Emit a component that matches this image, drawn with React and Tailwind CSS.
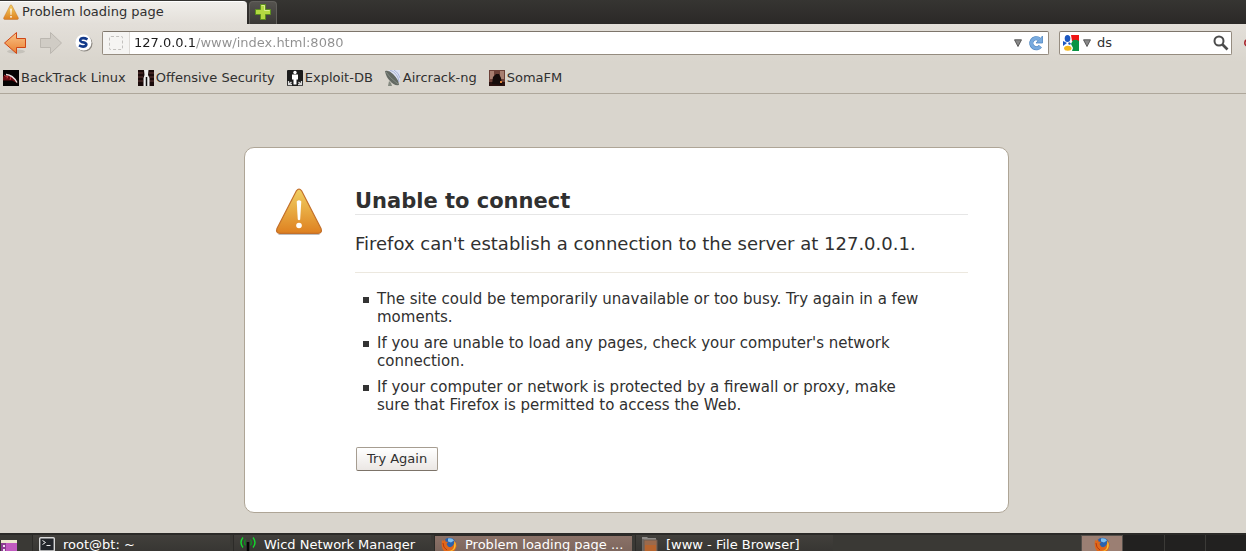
import React, { useState } from 'react';

const BOOKMARKS = [
    { label: 'BackTrack Linux', icon: BackTrackIcon },
    { label: 'Offensive Security', icon: OffensiveIcon },
    { label: 'Exploit-DB', icon: ExploitIcon },
    { label: 'Aircrack-ng', icon: DishIcon },
    { label: 'SomaFM', icon: SomaIcon },
];

const HINTS = [
    'The site could be temporarily unavailable or too busy. Try again in a few moments.',
    "If you are unable to load any pages, check your computer's network connection.",
    'If your computer or network is protected by a firewall or proxy, make sure that Firefox is permitted to access the Web.',
];

const WINDOWS = [
    { label: 'root@bt: ~', icon: TerminalIcon },
    { label: 'Wicd Network Manager', icon: WifiIcon },
    { label: 'Problem loading page ...', icon: FirefoxIcon, active: true },
    { label: '[www - File Browser]', icon: FolderIcon },
];

function WarningIcon({ className, id }) {
    return (
        <svg viewBox="0 0 48 48" className={className} aria-hidden="true">
            <defs>
                <linearGradient id={id} x1="0" y1="0" x2="0" y2="1">
                    <stop offset="0" stopColor="#f0cf62" />
                    <stop offset="0.5" stopColor="#e8a941" />
                    <stop offset="1" stopColor="#de8020" />
                </linearGradient>
            </defs>
            <path d="M4 47.2h40" stroke="#000" strokeOpacity=".25" strokeWidth="1.4" strokeLinecap="round" />
            <path
                d="M21.4 3.8Q24 .6 26.6 3.8L46 41.5q1.6 4.6-3 4.8H5q-4.6-.2-3-4.8Z"
                fill={`url(#${id})`}
                stroke="#c3702b"
                strokeWidth="1.2"
            />
            <path d="M21.7 14.5q2.3-2.3 4.6 0L25.2 32.5q-1.2 1.5-2.4 0Z" fill="#fff" />
            <circle cx="24" cy="38.5" r="2.8" fill="#fff" />
        </svg>
    );
}

function BackTrackIcon() {
    return (
        <svg viewBox="0 0 16 16" className="size-4 shrink-0" aria-hidden="true">
            <path d="M0 0h16v16H0z" fill="#050303" />
            <path d="M0 6.5l5-1 5 2 5 6-6-3-9 0z" fill="#6b0d12" />
            <path d="M3 4.5q7 .5 11 8" stroke="#e9dede" strokeWidth="1.3" fill="none" />
            <path d="M1 5l3 2M5 5.5l-1 3M8 7l-1 3" stroke="#c8363c" strokeWidth="1" />
        </svg>
    );
}

function OffensiveIcon() {
    return (
        <svg viewBox="0 0 16 16" className="size-4 shrink-0" aria-hidden="true">
            <path d="M0 0h16v16H0z" fill="#1b0b0b" />
            <path d="M0 3h5M11 3h5M0 7h5M11 7h5M0 11h5M11 11h5" stroke="#4a2a29" strokeWidth="1.5" />
            <path d="M6 0h4.500l-.5 5 1.500 3v8H5.500V8L6.500 5z" fill="#eee" />
            <path d="M8.500 7v9" stroke="#111" strokeWidth="1.5" />
        </svg>
    );
}

function ExploitIcon() {
    return (
        <svg viewBox="0 0 16 16" className="size-4 shrink-0" aria-hidden="true">
            <rect width="16" height="16" rx="1" fill="#1c1c1c" />
            <circle cx="8" cy="2.5" r="1.7" fill="#fff" />
            <path d="M5 4.5h6v5H9.500v5h-3v-5H5z" fill="#fff" />
            <path d="M1.500 11v3.500H5M14.500 11v3.500H11M2 14l2.500-2M14 14l-2.500-2" stroke="#ddd" strokeWidth="1.3" fill="none" />
        </svg>
    );
}

function DishIcon() {
    return (
        <svg viewBox="0 0 16 16" className="size-4 shrink-0" aria-hidden="true">
            <path d="M3 0h12v13z" fill="#dde2f2" />
            <path d="M5 0q8 3 9 12M9 0q5 3 6 8" stroke="#a9b4d6" strokeWidth="1" fill="none" />
            <path d="M0 1q4-1 8 3 6 6 6 11-5 1-9-4Q1 7 0 1z" fill="#636963" />
            <path d="M1 2q3 5 12 12" stroke="#8b938b" strokeWidth=".8" fill="none" />
            <path d="M4 11l-1 5h4l-1-3" fill="#83887f" />
        </svg>
    );
}

function SomaIcon() {
    return (
        <svg viewBox="0 0 16 16" className="size-4 shrink-0" aria-hidden="true">
            <path d="M0 0h16v16H0z" fill="#6c4138" />
            <path d="M1 1h4v8H1zM11 1h4v8h-4z" fill="#a77e70" />
            <path d="M0 12h16v4H0z" fill="#2a1210" />
            <path d="M3 14l1-7 3-3h3l2 4 1 7z" fill="#150c0b" />
            <path d="M11 11h2v2h-2z" fill="#e0853a" />
        </svg>
    );
}

function ArrowIcon({ forward }) {
    return (
        <svg viewBox="0 0 24 24" className="size-6" aria-hidden="true">
            <defs>
                <linearGradient id="backFill" x1="0" y1="0" x2="0" y2="1">
                    <stop offset="0" stopColor="#f9c48a" />
                    <stop offset="1" stopColor="#ea8030" />
                </linearGradient>
            </defs>
            {forward ? (
                <path d="M1.500 7.500h10v-6L22.500 12l-11 10.500v-6h-10z" fill="#d0ccc5" stroke="#bbb7b0" />
            ) : (
                <>
                    <ellipse cx="13" cy="20.5" rx="9" ry="2" fill="#000" opacity=".1" />
                    <path d="M22.500 7.500h-9v-6L1.500 12l12 10.500v-6h9z" fill="url(#backFill)" stroke="#cf4515" />
                </>
            )}
        </svg>
    );
}

function ScriptIcon() {
    return (
        <svg viewBox="0 0 18 18" className="size-[18px]" aria-hidden="true">
            <circle cx="9.5" cy="9.5" r="8" fill="#8d8983" />
            <circle cx="8.5" cy="8.5" r="8" fill="#fff" />
            <path
                d="M12.500 5.300Q8.500 3.300 6 4.700q-1.900 2 .6 3.200l3.400.9q2.500 1.300.5 3.200-2.700 1.400-6.500-.6"
                fill="none"
                stroke="#12398a"
                strokeWidth="2.6"
            />
        </svg>
    );
}

function DownTriangle() {
    return (
        <svg viewBox="0 0 8 8" className="size-2" aria-hidden="true">
            <path d="M.5.800h7L4 7.500z" fill="#888" stroke="#4e4e4e" strokeWidth=".9" />
        </svg>
    );
}

function ReloadIcon() {
    return (
        <svg viewBox="0 0 16 16" className="size-4" aria-hidden="true">
            <path d="M12.300 11.300A5 5 0 1 1 11 4" fill="none" stroke="#4f86c0" strokeWidth="4.2" />
            <path d="M14.500 1v7H8z" fill="#78aade" stroke="#4f86c0" strokeWidth=".8" />
            <path d="M12.300 11.300A5 5 0 1 1 11.500 4.300" fill="none" stroke="#78aade" strokeWidth="3" />
        </svg>
    );
}

function GoogleIcon() {
    return (
        <svg viewBox="0 0 16 16" className="size-4" aria-hidden="true">
            <path d="M0 0h16v16H0z" fill="#fff" />
            <path d="M8 0h8v6H9z" fill="#f01414" />
            <path d="M10 5q3-1 6 1v10H9l1-3-2-4z" fill="#0b9444" />
            <path d="M0 6l4 2-4 3z" fill="#1c57c0" />
            <ellipse cx="4.5" cy="3.5" rx="2.8" ry="3.5" fill="#1c57c0" />
            <path d="M6 7l2 1.500L7 10 5 9z" fill="#1c57c0" />
            <ellipse cx="4.8" cy="13.3" rx="3.7" ry="2.5" fill="#f6b81a" />
        </svg>
    );
}

function SearchIcon() {
    return (
        <svg viewBox="0 0 16 16" className="size-4" aria-hidden="true">
            <circle cx="6" cy="6" r="4.5" fill="none" stroke="#4c4c4c" strokeWidth="2" />
            <path d="M9.500 9.500l5 5" stroke="#4c4c4c" strokeWidth="2.6" />
        </svg>
    );
}

function TerminalIcon() {
    return (
        <svg viewBox="0 0 16 16" className="size-4 shrink-0" aria-hidden="true">
            <rect x=".7" y="1.7" width="14.6" height="13.3" rx="1" fill="#23262b" stroke="#d8d8d8" strokeWidth="1.4" />
            <path d="M3.500 4.500L6.500 6.500l-3 2M7.500 9.500h4" fill="none" stroke="#eee" />
        </svg>
    );
}

function WifiIcon() {
    return (
        <svg viewBox="0 0 16 16" className="size-4 shrink-0" aria-hidden="true">
            <path d="M8 6v10" stroke="#050505" strokeWidth="2.5" />
            <path d="M5.500 3.500q-2 3 0 6M10.500 3.500q2 3 0 6" fill="none" stroke="#0c8f20" strokeWidth="1.2" />
            <path d="M3 1.500q-4 5 0 10M13 1.500q4 5 0 10" fill="none" stroke="#16d82e" strokeWidth="1.4" />
        </svg>
    );
}

function FirefoxIcon() {
    return (
        <svg viewBox="0 0 16 16" className="size-4 shrink-0" aria-hidden="true">
            <circle cx="8.5" cy="7.5" r="6.8" fill="#2a62ae" />
            <path d="M7 1.500q4-1 6 2l-3 2-3-1z" fill="#7fc0ee" />
            <path d="M1 3l1.500 1L4 2l.5 2.500L7 5 5.500 7 7 9.500q2.500 1.500 4.500-.5Q14 7 13 3q3 3 2.500 6.500Q14 16 8 15.800 1.500 15.500.8 9 .5 6 1 3z" fill="#e0671a" />
            <path d="M13.500 4q2.500 4 0 8Q11 15 7 14q5 0 6-4z" fill="#f9c52f" />
            <path d="M2 6q0 5 4 7" stroke="#b8380d" fill="none" />
        </svg>
    );
}

function FolderIcon() {
    return (
        <svg viewBox="0 0 16 16" className="size-4 shrink-0" aria-hidden="true">
            <path d="M0 1h5l1 1h8v4H0z" fill="#8e8b88" />
            <path d="M0 3h2v13H0z" fill="#6f6a66" />
            <path d="M2 4h13v12H2z" fill="#9b6a4c" stroke="#6d5d53" />
            <path d="M3 9h11v7H3z" fill="#b7652f" />
        </svg>
    );
}

function DesktopIcon() {
    return (
        <svg viewBox="0 0 16 16" className="size-4" aria-hidden="true">
            <path d="M0 1h16v15H0z" fill="#c25bc0" />
            <path d="M0 1h16v3H0z" fill="#ece8cf" />
            <path d="M0 4h5v12H0z" fill="#8d3c92" />
            <path d="M2 6h2v2H2zM2 10h2v2H2z" fill="#f1e3f1" />
        </svg>
    );
}

function TabStrip() {
    return (
        <div className="flex h-6 shrink-0 gap-0.5 bg-linear-to-b from-[#363532] to-[#2b2927]">
            <button className="mt-px flex w-[247px] items-center gap-[3px] rounded-tr-sm border-t border-white bg-linear-to-b from-[#f0eeea] to-[#e3dfd9] pb-0.5 pl-[3px]">
                <WarningIcon className="size-4" id="tabWarning" />
                Problem loading page
            </button>
            <button
                aria-label="Open a new tab"
                className="mt-px flex w-7 items-center justify-center rounded-t-sm border border-b-0 border-[#62605c] bg-linear-to-b from-[#55534f] to-[#3a3835] pb-0.5"
            >
                <svg viewBox="0 0 16 16" className="size-4" aria-hidden="true">
                    <path d="M5.500.500h5v5h5v5h-5v5h-5v-5h-5v-5h5z" fill="#b3d941" stroke="#5c8f1e" />
                    <path d="M6.500 1.500h3v5h5" fill="none" stroke="#d8ee8e" />
                </svg>
            </button>
        </div>
    );
}

function NavBar() {
    const [url, setUrl] = useState('127.0.0.1/www/index.html:8080');
    const [search, setSearch] = useState('ds');

    return (
        <div className="flex h-[38px] shrink-0 items-center overflow-hidden bg-linear-to-b from-[#e3dfd9] to-[#d9d5cd] pl-[3px]">
            <button aria-label="Back"><ArrowIcon /></button>
            <button aria-label="Forward" className="ml-3" disabled><ArrowIcon forward /></button>
            <button aria-label="Script options" className="ml-3"><ScriptIcon /></button>

            {/* Location bar */}
            <div className="ml-[9px] flex h-6 min-w-0 flex-1 items-center rounded-xs border border-[#958c80] border-t-[#7d756b] bg-white">
                <span className="flex h-full w-[27px] items-center justify-center border-r border-[#dddad6] bg-[#f5f4f2]">
                    <span className="size-3.5 rounded-xs border border-dashed border-[#c3c1be]" />
                </span>
                {/* The host part is dark, the path after it is grey */}
                <input
                    aria-label="Location"
                    value={url}
                    onChange={(e) => setUrl(e.target.value)}
                    className="min-w-0 flex-1 bg-linear-to-r from-[#1c1c1c] from-[65px] to-[#8e8e8e] to-[65px] bg-clip-text pl-1 text-transparent caret-black outline-none"
                />
                <button aria-label="Show history" className="mr-1.5"><DownTriangle /></button>
                <button aria-label="Reload" className="mr-1"><ReloadIcon /></button>
            </div>

            {/* Search bar */}
            <div className="ml-2.5 flex h-6 w-[173px] items-center rounded-xs border border-[#958c80] border-t-[#7d756b] bg-white">
                <button aria-label="Choose search engine" className="ml-[3px] flex items-center gap-1">
                    <GoogleIcon />
                    <DownTriangle />
                </button>
                <input
                    aria-label="Search"
                    value={search}
                    onChange={(e) => setSearch(e.target.value)}
                    className="min-w-0 flex-1 pl-1.5 outline-none"
                />
                <button aria-label="Go" className="mr-0.5"><SearchIcon /></button>
            </div>

            <div className="ml-3 w-0.5 overflow-hidden">
                <svg viewBox="0 0 16 16" className="size-4" aria-hidden="true">
                    <circle cx="4" cy="8" r="3.2" fill="#e9c9c6" stroke="#a8242c" strokeWidth="1.6" />
                </svg>
            </div>
        </div>
    );
}

function BookmarksBar() {
    return (
        <nav className="flex h-8 shrink-0 items-center gap-3 border-b border-[#aea79b] pl-[3px]">
            {BOOKMARKS.map(({ label, icon: Icon }) => (
                <a key={label} href="#" className="flex items-center gap-0.5 whitespace-nowrap">
                    <Icon />
                    {label}
                </a>
            ))}
        </nav>
    );
}

function ErrorPage() {
    return (
        <main className="grow pt-[53px] pb-5 pl-[7px]">
            <div className="mx-auto flex max-w-[765px] items-start gap-8 rounded-[10px] border border-[#aea596] bg-white pt-[39px] pr-10 pb-[41px] pl-[30px]">
                <WarningIcon className="size-12 shrink-0" id="pageWarning" />
                <div className="min-w-0 flex-1">
                    <h1 className="border-b border-[#e6e6e6] pt-0.5 text-[21px] leading-[25px] font-bold">Unable to connect</h1>
                    <p className="border-b border-[#ece8df] pt-4 pb-[15px] text-[18px] leading-[26px]">
                        Firefox can't establish a connection to the server at 127.0.0.1.
                    </p>
                    <ul className="mt-[17px] mb-[33px] flex flex-col gap-2 pr-10 text-[15px] leading-[18px]">
                        {HINTS.map((hint) => (
                            <li key={hint} className="flex gap-2 pl-2">
                                <span className="mt-[7px] size-1.5 shrink-0 bg-[#333]" />
                                {hint}
                            </li>
                        ))}
                    </ul>
                    <button className="ml-px h-6 rounded-xs border border-[#a69d91] border-b-[#7c7368] bg-linear-to-b from-white to-[#ebe7e4] px-2.5">
                        Try Again
                    </button>
                </div>
            </div>
        </main>
    );
}

function Taskbar() {
    return (
        <footer className="flex h-[22px] shrink-0 border-t-2 border-[#2b2a28] bg-[#3a3935] leading-none text-white">
            <button aria-label="Show desktop" className="ml-px flex w-5 items-start pt-1"><DesktopIcon /></button>
            <div className="ml-[11px] flex min-w-0 flex-1 gap-[3px]">
                {WINDOWS.map(({ label, icon: Icon, active }) => (
                    <button
                        key={label}
                        className={`flex w-[198px] items-center gap-2 border-l border-[#2c2b28] pb-0.5 pl-1.5 whitespace-nowrap ${active ? 'border-t bg-linear-to-b from-[#8b7268] to-[#79635a]' : 'bg-linear-to-b from-[#42403c] to-[#353431]'}`}
                    >
                        <Icon />
                        {label}
                    </button>
                ))}
            </div>
            {/* Workspace switcher */}
            <div className="flex w-[165px] divide-x divide-[#3b3a37] bg-[#222120]">
                <button aria-label="Workspace 1" className="flex flex-1 items-start justify-center border-t border-l border-[#55504b] bg-[#9b7f73] pt-px">
                    <FirefoxIcon />
                </button>
                <button aria-label="Workspace 2" className="flex-1" />
                <button aria-label="Workspace 3" className="flex-1" />
                <button aria-label="Workspace 4" className="flex-1" />
            </div>
        </footer>
    );
}

export default function App() {
    return (
        <div className="flex h-screen flex-col overflow-hidden bg-[#d9d5cd] font-['DejaVu_Sans',sans-serif] text-[13px] leading-5 text-[#303030]">
            <TabStrip />
            <NavBar />
            <BookmarksBar />
            <ErrorPage />
            <Taskbar />
        </div>
    );
}
